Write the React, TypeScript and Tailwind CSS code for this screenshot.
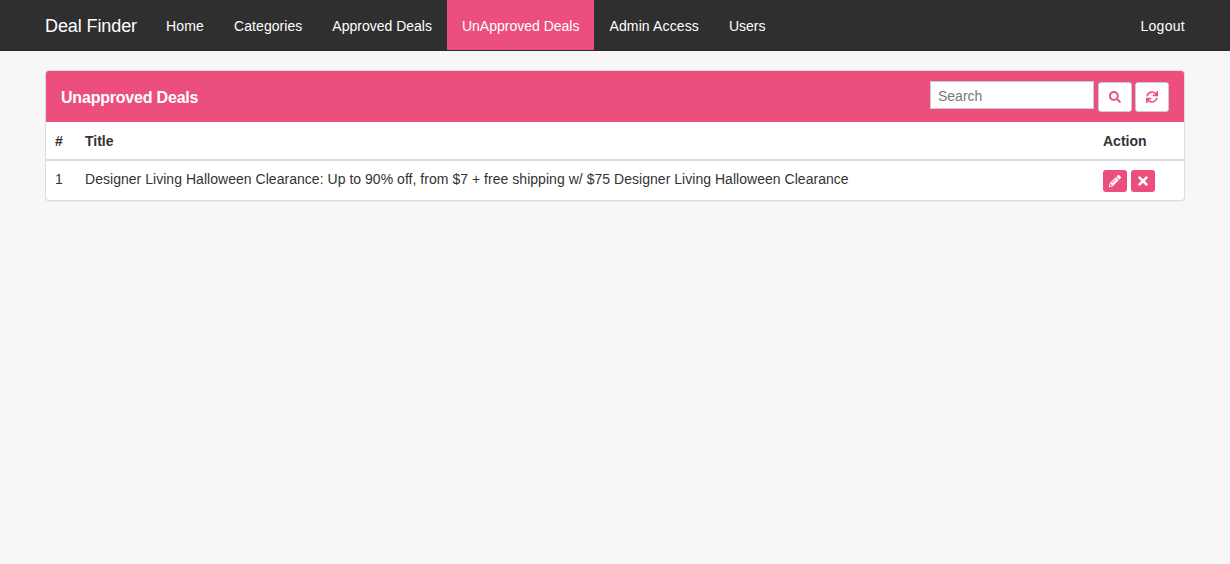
import { FaPencilAlt, FaSearch, FaSync, FaTimes } from "react-icons/fa";

const links = [
  { label: "Home", tracking: "tracking-[0.2px]" },
  { label: "Categories", tracking: "tracking-[0.05px]" },
  { label: "Approved Deals", tracking: "" },
  { label: "UnApproved Deals", tracking: "" },
  { label: "Admin Access", tracking: "tracking-[0.13px]" },
  { label: "Users", tracking: "" },
];

const Navbar = () => {
  return (
    <nav className="flex h-[51px] items-start justify-between border-b border-[#2a2a2a] bg-[#2f2f2f] px-[45px] text-[14px] text-white">
      <div className="flex">
        <a className="h-[50px] pr-[14px] text-[18px] leading-[52px] tracking-[-0.1px]">Deal Finder</a>
        {links.map((link) => (
          <a
            key={link.label}
            className={
              link.label === "UnApproved Deals"
                ? "h-[50px] bg-[#ec4f7e] px-[15px] leading-[52px]"
                : `h-[50px] px-[15px] leading-[52px] ${link.tracking}`
            }
          >
            {link.label}
          </a>
        ))}
      </div>
      <a className="h-[50px] leading-[52px] tracking-[0.3px]">Logout</a>
    </nav>
  );
};

const App = () => {
  return (
    <div className="min-h-[564px] bg-[#f7f7f7] font-['Liberation_Sans',Arial,sans-serif] text-[14px] text-[#333333]">
      <Navbar />
      <div className="px-[45px] pt-[19px]">
        <div className="overflow-hidden rounded border border-[#dddddd] bg-white shadow-[0_1px_1px_rgba(0,0,0,0.05)]">
          <div className="flex h-[51px] items-start justify-between bg-[#ec4f7e] pl-[15px] pr-[15px]">
            <h3 className="text-[16px] font-bold leading-[54px] tracking-[-0.2px] text-white">Unapproved Deals</h3>
            <div className="flex gap-[3px] pt-[10px]">
              <input
                placeholder="Search"
                className="mr-[1px] h-[28px] w-[164px] border border-[#cccccc] bg-white px-[7px] pt-[2px] text-[14px] outline-none placeholder:text-[#777777]"
              />
              <button className="mt-[1px] flex h-[30px] w-[34px] items-center justify-center rounded-[3px] border border-[#cccccc] bg-white text-[#ec4f7e]">
                <FaSearch className="h-[12px] w-[12px]" />
              </button>
              <button className="mt-[1px] flex h-[30px] w-[34px] items-center justify-center rounded-[3px] border border-[#cccccc] bg-white text-[#ec4f7e]">
                <FaSync className="h-[12px] w-[12px]" />
              </button>
            </div>
          </div>
          <div className="flex h-[39px] items-center border-b-2 border-[#dddddd] pt-[1px] font-bold">
            <div className="w-[39px] pl-[9px]">#</div>
            <div className="flex-1">Title</div>
            <div className="w-[81px]">Action</div>
          </div>
          <div className="flex h-[39px] items-center">
            <div className="w-[39px] pl-[9px] pb-[2px]">1</div>
            <div className="flex-1 pb-[2px] tracking-[0.034px]">
              Designer Living Halloween Clearance: Up to 90% off, from $7 + free shipping w/ $75 Designer Living Halloween Clearance
            </div>
            <div className="flex w-[81px] gap-[4px]">
              <button className="flex h-[22px] w-[24px] items-center justify-center rounded-[3px] bg-[#ec4f7e] text-white">
                <FaPencilAlt className="h-[12px] w-[12px]" />
              </button>
              <button className="flex h-[22px] w-[24px] items-center justify-center rounded-[3px] bg-[#ec4f7e] text-white">
                <FaTimes className="h-[14px] w-[14px]" />
              </button>
            </div>
          </div>
        </div>
      </div>
    </div>
  );
};

export default App;
